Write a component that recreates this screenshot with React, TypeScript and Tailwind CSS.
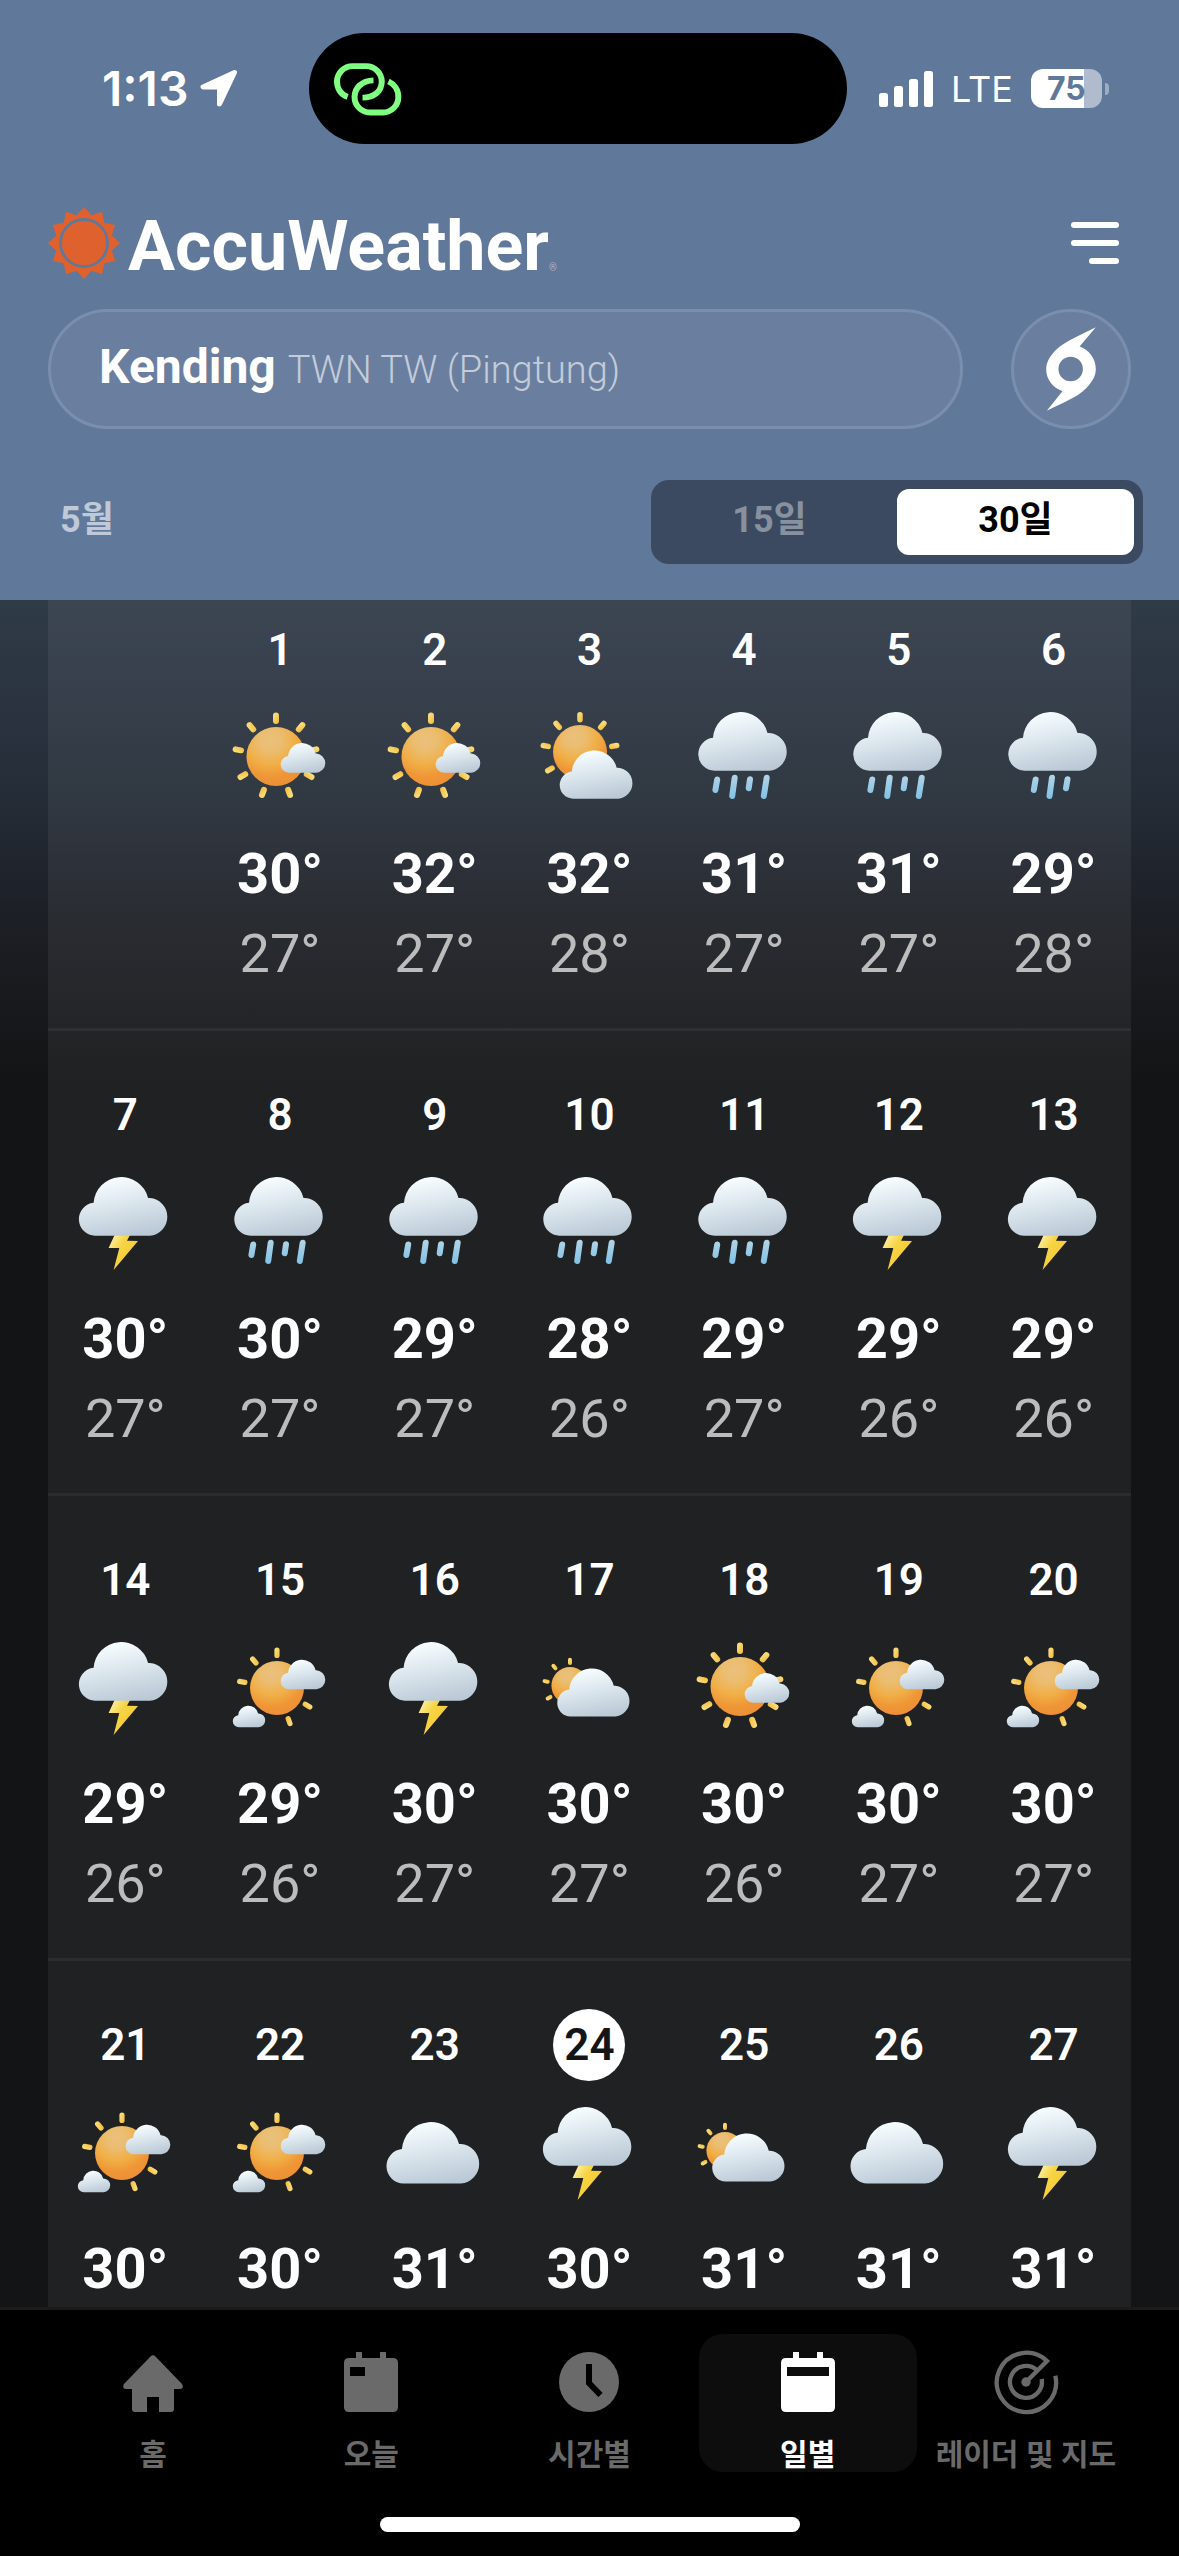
import { useState } from 'react'
import type { ReactNode } from 'react'
import clsx from 'clsx'

type Sky = 'sunny' | 'partly' | 'hazy' | 'mixed' | 'cloudy' | 'rain' | 'showers' | 'storm'

interface Day {
  day: number
  sky: Sky
  high: number
  low?: number
}

const weeks: (Day | null)[][] = [
  [
    null,
    { day: 1, sky: 'sunny', high: 30, low: 27 },
    { day: 2, sky: 'sunny', high: 32, low: 27 },
    { day: 3, sky: 'partly', high: 32, low: 28 },
    { day: 4, sky: 'rain', high: 31, low: 27 },
    { day: 5, sky: 'rain', high: 31, low: 27 },
    { day: 6, sky: 'showers', high: 29, low: 28 },
  ],
  [
    { day: 7, sky: 'storm', high: 30, low: 27 },
    { day: 8, sky: 'rain', high: 30, low: 27 },
    { day: 9, sky: 'rain', high: 29, low: 27 },
    { day: 10, sky: 'rain', high: 28, low: 26 },
    { day: 11, sky: 'rain', high: 29, low: 27 },
    { day: 12, sky: 'storm', high: 29, low: 26 },
    { day: 13, sky: 'storm', high: 29, low: 26 },
  ],
  [
    { day: 14, sky: 'storm', high: 29, low: 26 },
    { day: 15, sky: 'mixed', high: 29, low: 26 },
    { day: 16, sky: 'storm', high: 30, low: 27 },
    { day: 17, sky: 'hazy', high: 30, low: 27 },
    { day: 18, sky: 'sunny', high: 30, low: 26 },
    { day: 19, sky: 'mixed', high: 30, low: 27 },
    { day: 20, sky: 'mixed', high: 30, low: 27 },
  ],
  [
    { day: 21, sky: 'mixed', high: 30 },
    { day: 22, sky: 'mixed', high: 30 },
    { day: 23, sky: 'cloudy', high: 31 },
    { day: 24, sky: 'storm', high: 30 },
    { day: 25, sky: 'hazy', high: 31 },
    { day: 26, sky: 'cloudy', high: 31 },
    { day: 27, sky: 'storm', high: 31 },
  ],
]

const TODAY = 24

// Gradients shared by every weather icon on the page
function IconDefs() {
  return (
    <svg className="absolute size-0" aria-hidden="true">
      <defs>
        <linearGradient id="cloud" x1="0.35" y1="0" x2="0.65" y2="1">
          <stop offset="0.05" stopColor="#f5fcff" />
          <stop offset="1" stopColor="#bac9d6" />
        </linearGradient>
        <radialGradient id="sun" cx="0.4" cy="0.22" r="0.78">
          <stop offset="0" stopColor="#eac07c" />
          <stop offset="0.25" stopColor="#ebbd70" />
          <stop offset="0.55" stopColor="#f1ae45" />
          <stop offset="0.8" stopColor="#ef9636" />
          <stop offset="1" stopColor="#ee9036" />
        </radialGradient>
        <linearGradient id="ray" x1="0" y1="0" x2="1" y2="1">
          <stop offset="0" stopColor="#fbe68a" />
          <stop offset="1" stopColor="#f3b93a" />
        </linearGradient>
        <linearGradient id="drop" gradientUnits="userSpaceOnUse" x1="0" y1="70" x2="0" y2="95">
          <stop offset="0" stopColor="#b4d5e6" />
          <stop offset="1" stopColor="#7fc1e6" />
        </linearGradient>
        <linearGradient id="bolt" x1="0.1" y1="0.1" x2="0.6" y2="0.5">
          <stop offset="0" stopColor="#fcee9c" />
          <stop offset="0.6" stopColor="#f7d445" />
          <stop offset="1" stopColor="#f6d03c" />
        </linearGradient>
      </defs>
    </svg>
  )
}

function Cloud({ x, y, scale = 1 }: { x: number; y: number; scale?: number }) {
  return (
    <path
      transform={`translate(${x} ${y}) scale(${scale})`}
      fill="url(#cloud)"
      d="M16.5 58.7A16.5 16.5 0 0 1 15 25.8A27.7 27.7 0 0 1 69.5 21H71.2A18.9 18.9 0 0 1 71.2 58.7Z"
    />
  )
}

interface SunProps {
  cx: number
  cy: number
  r: number
  inner: number
  outer: number
  width: number
  angles: number[]
}

function Sun({ cx, cy, r, inner, outer, width, angles }: SunProps) {
  return (
    <>
      {angles.map(a => (
        <rect
          key={a}
          x={cx - width / 2}
          y={cy - outer}
          width={width}
          height={outer - inner}
          rx={width / 2}
          fill="url(#ray)"
          transform={`rotate(${a} ${cx} ${cy})`}
        />
      ))}
      <circle cx={cx} cy={cy} r={r} fill="url(#sun)" />
    </>
  )
}

function Drops({ d }: { d: string }) {
  return <path d={d} stroke="url(#drop)" strokeWidth="6" strokeLinecap="round" fill="none" />
}

const ALL_RAYS = [0, 40, 80, 120, 160, 200, 240, 280, 320]

const skies: Record<Sky, { label: string; art: ReactNode }> = {
  sunny: {
    label: '대체로 맑음',
    art: (
      <>
        <Sun cx={50} cy={52.5} r={29.5} inner={32.5} outer={44} width={6} angles={ALL_RAYS} />
        <Cloud x={54.5} y={39} scale={0.505} />
      </>
    ),
  },
  partly: {
    label: '구름 조금',
    art: (
      <>
        <Sun cx={45} cy={48} r={27} inner={29.5} outer={40} width={5.5} angles={[0, 40, 80, 240, 280, 320]} />
        <Cloud x={24.5} y={46.4} scale={0.822} />
      </>
    ),
  },
  hazy: {
    label: '구름 많음',
    art: (
      <>
        <Sun cx={35} cy={51.6} r={18.6} inner={20.6} outer={27.8} width={4} angles={[0, 240, 280, 320]} />
        <Cloud x={22} y={34.5} scale={0.817} />
      </>
    ),
  },
  mixed: {
    label: '때때로 구름',
    art: (
      <>
        <Sun cx={51} cy={54} r={27} inner={30} outer={40.5} width={5.2} angles={[0, 120, 160, 280, 320]} />
        <Cloud x={54.5} y={25.7} scale={0.505} />
        <Cloud x={6.7} y={71.7} scale={0.366} />
      </>
    ),
  },
  cloudy: { label: '흐림', art: <Cloud x={5.2} y={23} scale={1.048} /> },
  rain: {
    label: '비',
    art: (
      <>
        <Cloud x={8} y={8} />
        <Drops d="M27.2 75.5L25.4 86M44.7 73.7L42.2 92M60 75.3L58.7 84.3M76.7 73.7L73.8 92" />
      </>
    ),
  },
  showers: {
    label: '소나기',
    art: (
      <>
        <Cloud x={8} y={8} />
        <Drops d="M35.6 75.5L33.8 86M52 73.7L49.5 92M67.5 75.3L66 84.3" />
      </>
    ),
  },
  storm: {
    label: '뇌우',
    art: (
      <>
        <path d="M43.6 66L59 66L56 71.8L67 72L42.6 101L48.3 79L37.6 79Z" fill="url(#bolt)" />
        <Cloud x={7.6} y={8} />
      </>
    ),
  },
}

function SunMark() {
  const points = Array.from({ length: 24 }, (_, i) => {
    const r = i % 2 ? 28.8 : 36
    const a = (i * Math.PI) / 12
    return `${36 + r * Math.sin(a)},${36 - r * Math.cos(a)}`
  }).join(' ')
  return (
    <svg viewBox="0 0 72 72" className="size-[72px]" aria-hidden="true">
      <polygon points={points} fill="#df612e" />
      <circle cx="36" cy="36" r="23.5" fill="none" stroke="#60789a" strokeWidth="2.8" />
    </svg>
  )
}

function StatusBar() {
  return (
    <div className="grid h-[111px] grid-cols-[309fr_538px_332fr] items-center">
      <div className="flex items-center gap-3 pl-[102px] font-['Inter',sans-serif] text-5xl font-semibold">
        1:13
        <svg viewBox="0 0 37 37" className="size-[37px]" aria-hidden="true">
          <path d="M34.5 2.500L3 17H19.500V34Z" fill="#fff" stroke="#fff" strokeWidth="5" strokeLinejoin="round" />
        </svg>
      </div>
      <div className="flex h-full items-center rounded-full bg-black pl-6">
        <svg viewBox="100 94 208 162" className="h-[54px] w-[69px]" fill="none" stroke="#80ff80" strokeWidth="18" aria-hidden="true">
          <path d="M144 199C124 192 112 174 112 152A47 47 0 0 1 159 106H200A47 47 0 0 1 247 152C247 182 224 201 189 201" />
          <path d="M222 149C186 150 165 172 165 199A47 47 0 0 0 212 246H250A47 47 0 0 0 297 199C297 178 285 160 267 152" />
        </svg>
      </div>
      <div className="flex items-center gap-[18px] pl-8 font-['Inter',sans-serif]">
        <svg viewBox="0 0 54 36" className="h-9 w-[54px]" fill="#fff" aria-hidden="true">
          <rect x="0" y="22" width="9" height="14" rx="2.500" />
          <rect x="15" y="15" width="9" height="21" rx="2.500" />
          <rect x="30" y="8" width="9" height="28" rx="2.500" />
          <rect x="45" y="0" width="9" height="36" rx="2.500" />
        </svg>
        <span className="text-4xl">LTE</span>
        <div className="flex items-center gap-[3px]">
          <span className="flex h-[39px] w-[71px] items-center justify-center rounded-xl bg-linear-to-r from-white from-75% to-[#b0bccd] to-75% text-[32px] font-bold text-[#60789a]">
            75
          </span>
          <span className="h-3 w-1 rounded-r-full bg-[#9fadc2]" />
        </div>
      </div>
    </div>
  )
}

function RangeToggle() {
  const [range, setRange] = useState(30)
  return (
    <div className="flex gap-[9px] rounded-[18px] bg-[#3b4a61] py-[9px] pr-[9px]">
      {[15, 30].map(n => (
        <button
          key={n}
          type="button"
          aria-pressed={range === n}
          onClick={() => setRange(n)}
          className={clsx(
            'h-[66px] w-[237px] rounded-xl pb-1 text-4xl font-bold',
            range === n ? 'bg-white text-black' : 'text-[#8791a0]',
          )}
        >
          {n}일
        </button>
      ))}
    </div>
  )
}

function Header() {
  return (
    <header className="bg-[#60789a] pt-[33px] pb-9">
      <StatusBar />
      <div className="mt-[63px] flex items-center justify-between pr-[60px] pl-12">
        <h1 className="flex h-[72px] items-end gap-2">
          <SunMark />
          <span className="text-[70px] leading-[66px] font-bold">AccuWeather</span>
          <span className="-ml-2 pb-1 text-[10px] text-[#a9b5c7]">®</span>
        </h1>
        <button type="button" aria-label="메뉴" className="flex flex-col items-end gap-3">
          <span className="h-[6px] w-12 rounded-full bg-white" />
          <span className="h-[6px] w-12 rounded-full bg-white" />
          <span className="h-[6px] w-[30px] rounded-full bg-white" />
        </button>
      </div>
      <div className="mt-[30px] flex gap-12 px-12">
        <button
          type="button"
          className="flex h-[120px] flex-1 items-baseline gap-3 rounded-full border-3 border-[#7a8fae] bg-[#6a7f9f] pt-[22px] pl-12"
        >
          <span className="text-5xl leading-[66px] font-bold">Kending</span>
          <span className="text-[38px] font-light text-[#c3ccd9]">TWN TW (Pingtung)</span>
        </button>
        <button
          type="button"
          aria-label="허리케인"
          className="flex size-[120px] items-center justify-center rounded-full border-3 border-[#7a8fae] bg-[#6a7f9f]"
        >
          <svg viewBox="138 384 150 254" className="h-[84px] w-[50px]" aria-hidden="true">
            <path
              fill="#fff"
              fillRule="evenodd"
              d="M288 385C250 405 195 427 168 453C148 473 138 492 138 512C138 543 158 568 187 578L140 637C178 617 232 598 258 570C278 549 288 532 288 511C288 480 268 453 239 443ZM212 474A37 37 0 1 1 212 548A37 37 0 1 1 212 474Z"
            />
          </svg>
        </button>
      </div>
      <div className="mt-[51px] flex items-center justify-between pr-9 pl-[60px]">
        <h2 className="pb-1 text-4xl font-bold text-[#bfc9d7]">5월</h2>
        <RangeToggle />
      </div>
    </header>
  )
}

function DayCell({ data }: { data: Day | null }) {
  if (!data) return <td className="border-b-3 border-white/5" />
  const sky = skies[data.sky]
  return (
    <td className="border-b-3 border-white/5 px-0 pt-12 pb-[42px] align-top">
      <div className="flex flex-col items-center">
        <span
          className={clsx(
            'flex size-[72px] items-center justify-center rounded-full text-[44px] font-semibold',
            data.day === TODAY && 'bg-white text-[#141517]',
          )}
        >
          {data.day}
        </span>
        <svg viewBox="0 0 108 108" className="mt-[18px] size-[108px]" role="img" aria-label={sky.label}>
          {sky.art}
        </svg>
        <span className="mt-[30px] text-[56px] leading-[64px] font-bold">{data.high}°</span>
        {data.low && (
          <span className="mt-4 text-[54px] leading-[64px] text-[#bcbcbc]">{data.low}°</span>
        )}
      </div>
    </td>
  )
}

function Calendar() {
  return (
    <main className="min-h-0 flex-1 overflow-hidden bg-[#131415] bg-[linear-gradient(180deg,#303b48_0px,#252d38_190px,#1c1f25_320px,#131415_480px)] px-12">
      <div className="h-full overflow-hidden bg-[#ffffff0f]">
        <table className="-mt-[34px] w-full table-fixed border-separate border-spacing-0">
          <tbody>
            {weeks.map((week, i) => (
              <tr key={i}>
                {week.map((d, j) => (
                  <DayCell key={j} data={d} />
                ))}
              </tr>
            ))}
          </tbody>
        </table>
      </div>
    </main>
  )
}

function CalendarIcon({ slot }: { slot: number }) {
  return (
    <path
      fillRule="evenodd"
      d={`M15 0H21V6H39V0H45V6H52Q57 6 57 11V55Q57 60 52 60H8Q3 60 3 55V11Q3 6 8 6H15ZM9 15V24H${9 + slot}V15Z`}
    />
  )
}

const tabs: { label: string; icon: ReactNode; active?: boolean }[] = [
  {
    label: '홈',
    icon: (
      <path d="M27.500 4.500Q30 2 32.500 4.500L59 32Q61.500 36.500 57 37H51V57Q51 60 48 60H36V45H24V60H12Q9 60 9 57V37H3Q-1.500 36.500 1 32Z" />
    ),
  },
  { label: '오늘', icon: <CalendarIcon slot={15} /> },
  {
    label: '시간별',
    icon: (
      <>
        <circle cx="30" cy="30" r="30" />
        <path d="M30 12V31L41.500 43" fill="none" stroke="#000" strokeWidth="6" />
      </>
    ),
  },
  { label: '일별', icon: <CalendarIcon slot={42} />, active: true },
  {
    label: '레이더 및 지도',
    icon: (
      <g transform="translate(30 30) scale(0.333)" fill="none" stroke="currentColor" strokeWidth="13">
        <path d="M0 0L63 -63A89 89 0 1 0 88 -19" />
        <path d="M34 -34A48 48 0 1 0 47 -9" />
        <circle r="14" fill="currentColor" stroke="none" />
      </g>
    ),
  },
]

function TabBar() {
  return (
    <nav className="border-t-3 border-[#1b1b1b] bg-black pt-6 pb-6">
      <div className="grid grid-cols-5 px-11">
        {tabs.map(tab => (
          <a
            key={tab.label}
            href="#"
            aria-current={tab.active ? 'page' : undefined}
            className={clsx(
              'flex flex-col items-center rounded-3xl pt-[18px]',
              tab.active ? 'bg-[#0d0d0d] text-white' : 'text-[#6a6a6a]',
            )}
          >
            <svg viewBox="0 0 60 60" className="size-[60px] overflow-visible" fill="currentColor" aria-hidden="true">
              {tab.icon}
            </svg>
            <span className="mt-[26px] text-[30px] leading-[34px] font-bold whitespace-nowrap">{tab.label}</span>
          </a>
        ))}
      </div>
      <div className="mx-auto mt-[45px] h-[15px] w-[420px] rounded-full bg-white" />
    </nav>
  )
}

export default function App() {
  return (
    <div className="flex h-screen flex-col overflow-hidden bg-black font-['Roboto','Noto_Sans_CJK_KR',sans-serif] text-white">
      <IconDefs />
      <Header />
      <Calendar />
      <TabBar />
    </div>
  )
}
